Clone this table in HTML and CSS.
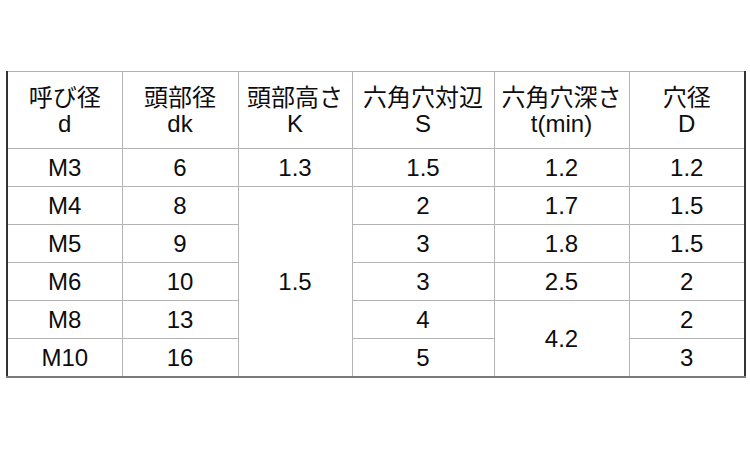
FILE: index.html
```html
<!DOCTYPE html>
<html lang="ja">
<head>
<meta charset="utf-8">
<link rel="stylesheet" href="styles.css">
</head>
<body>
<table class="spec">
  <colgroup>
    <col class="c1"><col class="c2"><col class="c3"><col class="c4"><col class="c5"><col class="c6">
  </colgroup>
  <thead>
    <tr class="head">
      <th>呼び径<br>d</th>
      <th>頭部径<br>dk</th>
      <th>頭部高さ<br>K</th>
      <th>六角穴対辺<br>S</th>
      <th>六角穴深さ<br>t(min)</th>
      <th>穴径<br>D</th>
    </tr>
  </thead>
  <tbody>
    <tr><td>M3</td><td>6</td><td>1.3</td><td>1.5</td><td>1.2</td><td>1.2</td></tr>
    <tr><td>M4</td><td>8</td><td rowspan="5">1.5</td><td>2</td><td>1.7</td><td>1.5</td></tr>
    <tr><td>M5</td><td>9</td><td>3</td><td>1.8</td><td>1.5</td></tr>
    <tr><td>M6</td><td>10</td><td>3</td><td>2.5</td><td>2</td></tr>
    <tr><td>M8</td><td>13</td><td>4</td><td rowspan="2">4.2</td><td>2</td></tr>
    <tr><td>M10</td><td>16</td><td>5</td><td>3</td></tr>
  </tbody>
</table>
</body>
</html>
```

FILE: styles.css
```css
html, body {
  margin: 0;
  padding: 0;
  background: #ffffff;
}

body {
  padding: 71px 0 0 6px;
  font-family: "Liberation Sans", "Noto Sans CJK JP", sans-serif;
  color: #0d0d0d;
}

.spec {
  border-collapse: collapse;
  table-layout: fixed;
  width: 738px;
  font-size: 24px;
  border-top: 1px solid #3a3a3a;
  border-left: 2px solid #333333;
  border-right: 2px solid #333333;
  border-bottom: 2px solid #7a7a7a;
}

.c1 { width: 115px; }
.c2 { width: 116px; }
.c3 { width: 114px; }
.c4 { width: 142px; }
.c5 { width: 135px; }
.c6 { width: 116px; }

.spec th,
.spec td {
  border: 1px solid #b4b4b4;
  text-align: center;
  vertical-align: middle;
  padding: 0;
}

.spec th {
  font-weight: normal;
  height: 74px;
  line-height: 26px;
  padding-top: 2px;
}

.spec td {
  height: 36px;
  line-height: 24px;
  padding-top: 1px;
}
```
